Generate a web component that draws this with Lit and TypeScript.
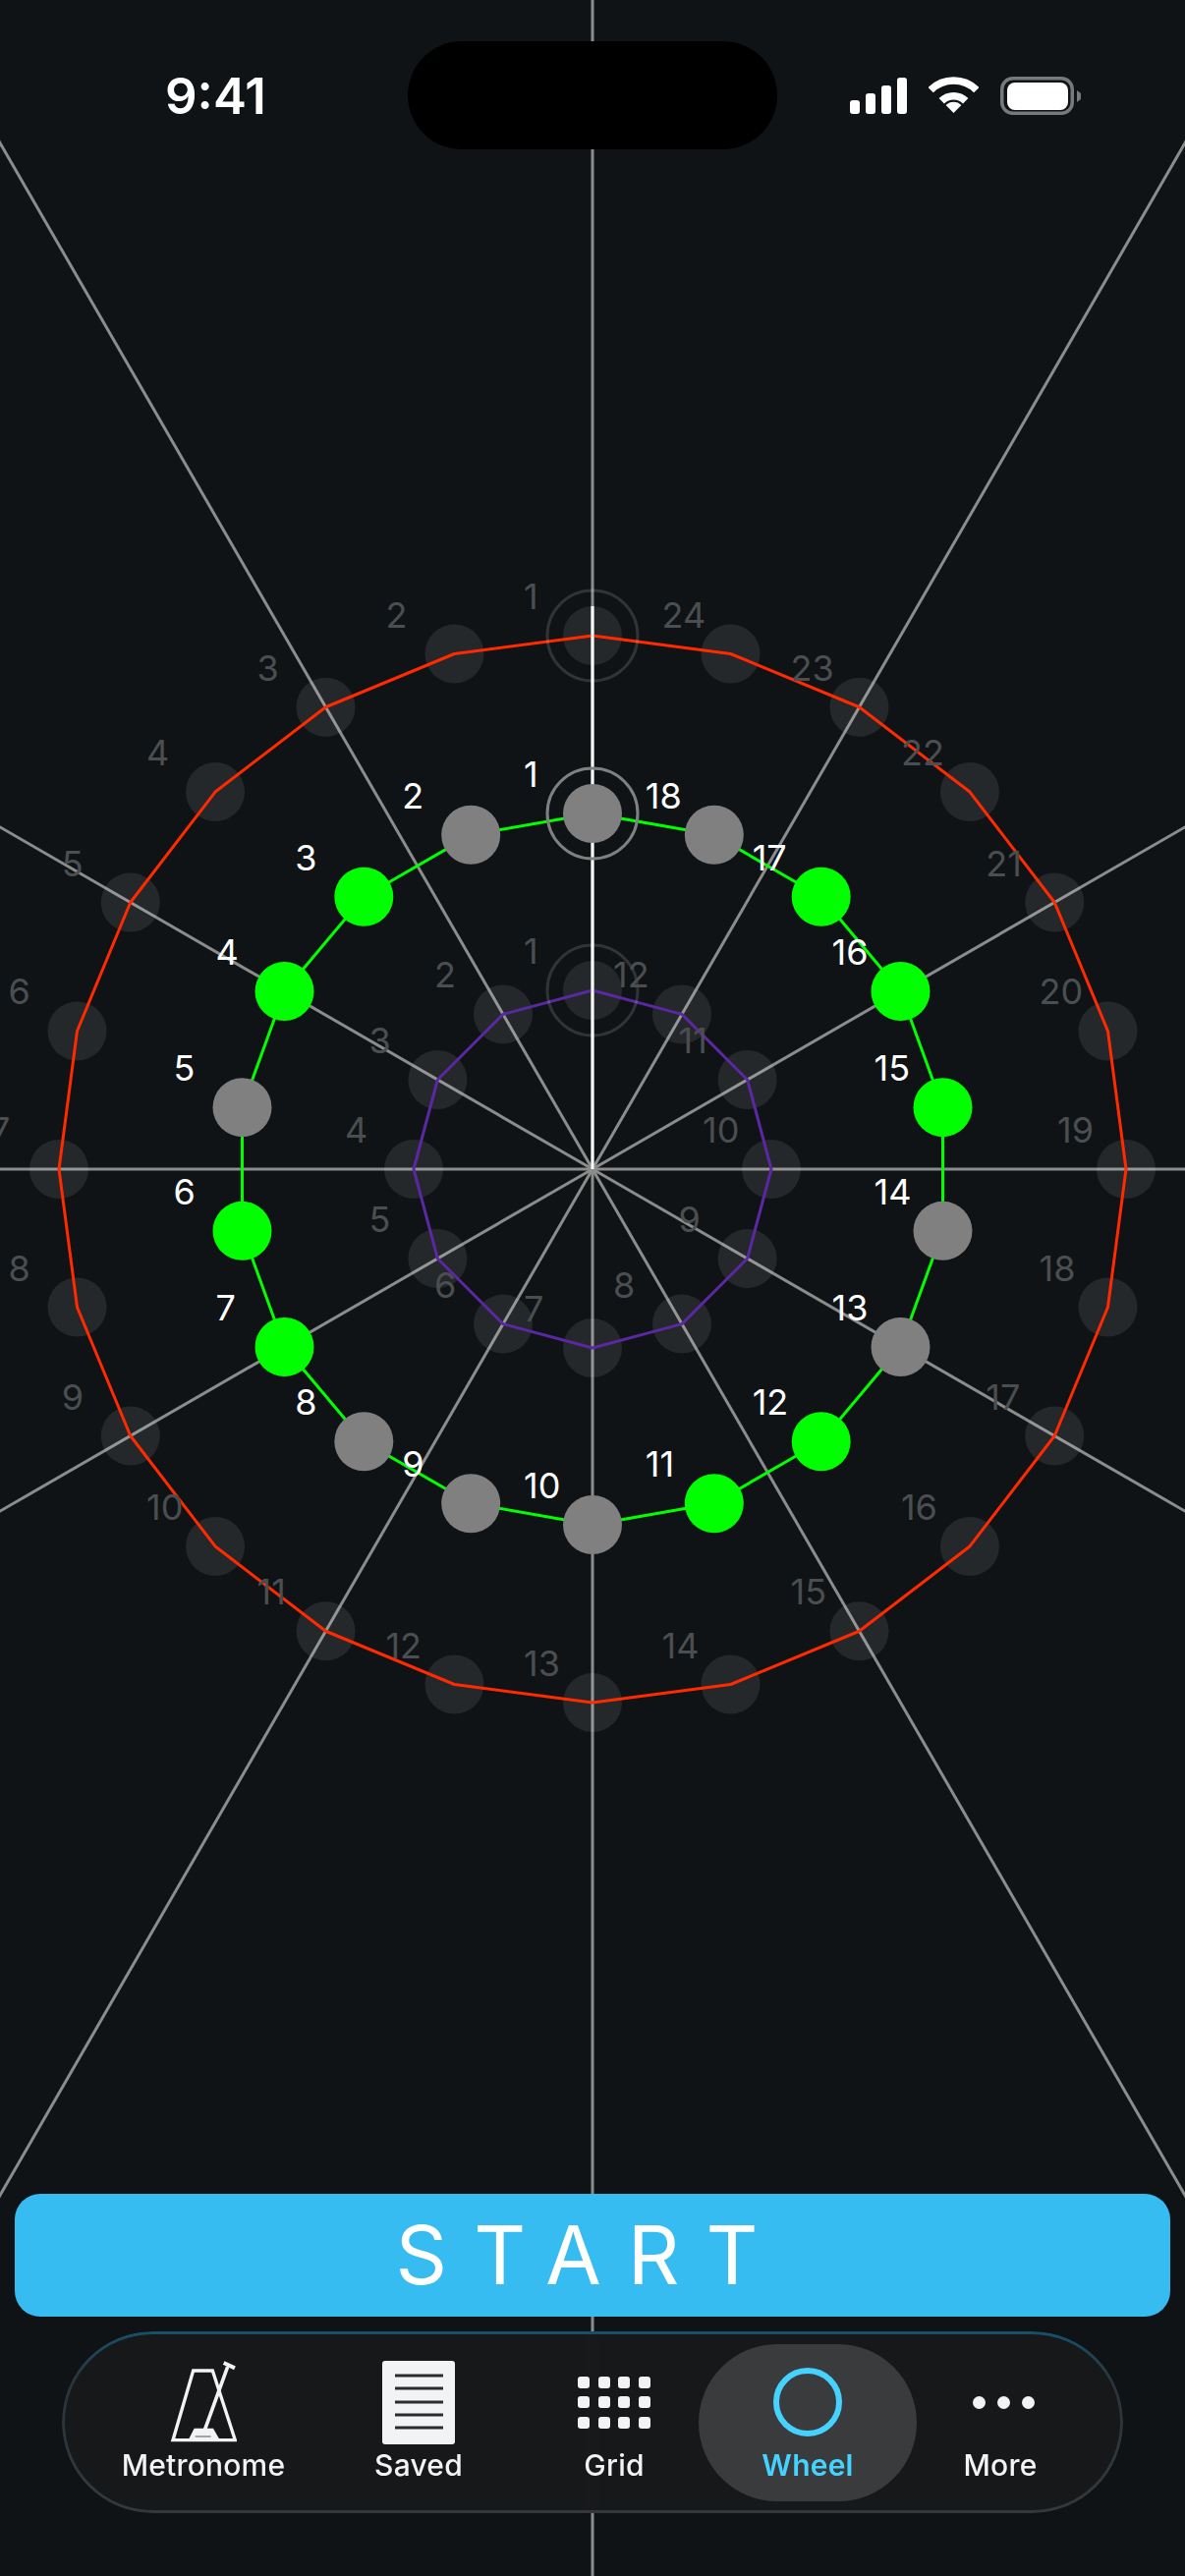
import { LitElement, html, css, svg } from "lit";
import { customElement } from "lit/decorators.js";

const CX = 603;
const CY = 1190;
const DOT_R = 30;

interface Ring {
  count: number;
  radius: number;
  line: string;
  active: boolean;
  on: number[];
}

const RINGS: Ring[] = [
  { count: 24, radius: 543, line: "red", active: false, on: [] },
  { count: 12, radius: 182, line: "purple", active: false, on: [] },
  { count: 18, radius: 362, line: "green", active: true, on: [3, 4, 6, 7, 11, 12, 15, 16, 17] },
];

const pt = (ring: Ring, i: number) => {
  const a = (i / ring.count) * Math.PI * 2;
  return { x: CX - ring.radius * Math.sin(a), y: CY - ring.radius * Math.cos(a) };
};

const fmt = (n: number) => n.toFixed(2);

function renderSpokes() {
  const out = [];
  for (let i = 0; i < 12; i++) {
    const a = (i * Math.PI) / 6;
    const x = CX + 3000 * Math.sin(a);
    const y = CY - 3000 * Math.cos(a);
    out.push(svg`<line class="spoke" x1=${CX} y1=${CY} x2=${fmt(x)} y2=${fmt(y)}></line>`);
  }
  return out;
}

function renderRingBack(ring: Ring) {
  const pts = Array.from({ length: ring.count }, (_, i) => pt(ring, i));
  const poly = pts.map((p) => `${fmt(p.x)},${fmt(p.y)}`).join(" ");
  return ring.active
    ? svg`<polygon class=${"poly " + ring.line} points=${poly}></polygon>
        ${pts.map((p, i) => svg`<circle class=${ring.on.includes(i + 1) ? "dot-green" : "dot-gray"} cx=${fmt(p.x)} cy=${fmt(p.y)} r=${DOT_R}></circle>`)}`
    : svg`${pts.map((p) => svg`<circle class="dot-dim" cx=${fmt(p.x)} cy=${fmt(p.y)} r=${DOT_R}></circle>`)}
        <polygon class=${"poly " + ring.line} points=${poly}></polygon>`;
}

function renderRingFront(ring: Ring) {
  const top = pt(ring, 0);
  const pts = Array.from({ length: ring.count }, (_, i) => pt(ring, i));
  return svg`<circle class=${ring.active ? "halo-on" : "halo-dim"} cx=${top.x} cy=${top.y} r="46"></circle>
    ${pts.map((p, i) => svg`<text class=${ring.active ? "lab-on" : "lab-dim"} x=${fmt(p.x - 70)} y=${fmt(p.y - 27)}>${i + 1}</text>`)}`;
}

@customElement("app-root")
export class AppRoot extends LitElement {
  static styles = css`
    :host {
      display: block;
      position: relative;
      width: 1206px;
      height: 2622px;
      overflow: hidden;
      background: #0f1316;
      font-family: Inter, "Liberation Sans", sans-serif;
    }
    .canvas {
      position: absolute;
      inset: 0;
      width: 1206px;
      height: 2622px;
    }
    .spoke {
      stroke: #8c8c8c;
      stroke-width: 3;
    }
    .beat {
      stroke: #fff;
      stroke-width: 3;
    }
    .poly {
      fill: none;
      stroke-width: 3;
      stroke-linejoin: round;
    }
    .red {
      stroke: #ff2a00;
    }
    .purple {
      stroke: #5a28a0;
    }
    .green {
      stroke: #00ff00;
    }
    .dot-dim {
      fill: rgba(255, 255, 255, 0.09);
    }
    .dot-gray {
      fill: #808080;
    }
    .dot-green {
      fill: #00ff00;
    }
    .halo-on,
    .halo-dim {
      fill: none;
      stroke-width: 3;
    }
    .halo-on {
      stroke: #808080;
    }
    .halo-dim {
      stroke: rgba(255, 255, 255, 0.14);
    }
    .lab-on,
    .lab-dim {
      font-size: 36px;
      font-family: Inter, "Liberation Sans", sans-serif;
    }
    .lab-on {
      fill: #fff;
    }
    .lab-dim {
      fill: #4b4e50;
    }
    .page {
      position: relative;
      display: flex;
      flex-direction: column;
      height: 2622px;
    }
    .status {
      display: flex;
      align-items: center;
      height: 110px;
      margin-top: 42px;
    }
    .time {
      width: 247px;
      padding-left: 168px;
      color: #fff;
      font-size: 51px;
      font-weight: 600;
      line-height: 1;
    }
    .island {
      width: 376px;
      height: 110px;
      border-radius: 55px;
      background: #000;
    }
    .indicators {
      display: flex;
      align-items: center;
      gap: 22px;
      margin-left: 74px;
    }
    .indicators svg {
      display: block;
    }
    .spacer {
      flex: 1;
    }
    .start {
      display: flex;
      align-items: center;
      justify-content: center;
      box-sizing: border-box;
      height: 125px;
      margin: 0 15px;
      padding-right: 5px;
      border-radius: 26px;
      background: #37bcf1;
      color: #fff;
      font-size: 82px;
      font-weight: 400;
      letter-spacing: 27px;
      line-height: 1;
    }
    .nav {
      position: relative;
      display: grid;
      grid-template-columns: 212px 226px 172px 222px 170px;
      box-sizing: border-box;
      width: 1080px;
      height: 185px;
      margin: 15px 0 64px 63px;
      padding: 13px 0 0 38px;
      border-radius: 92.5px;
      background: rgba(24, 25, 27, 0.97);
      backdrop-filter: blur(4px);
    }
    .nav::before {
      content: "";
      position: absolute;
      inset: 0;
      padding: 3px;
      border-radius: inherit;
      background: linear-gradient(180deg, #17506b 0, #2a3438 28%, #35383a 100%);
      -webkit-mask: linear-gradient(#000 0 0) content-box, linear-gradient(#000 0 0);
      -webkit-mask-composite: xor;
      mask-composite: exclude;
    }
    .item {
      display: flex;
      flex-direction: column;
      align-items: center;
      height: 160px;
      color: #f2f3f5;
    }
    .item.active {
      border-radius: 80px;
      background: #3a3b3d;
      color: #46d2fe;
    }
    .icon {
      display: flex;
      align-items: center;
      justify-content: center;
      height: 90px;
      margin-top: 14px;
    }
    .icon svg {
      display: block;
    }
    .label {
      margin-top: 1px;
      font-size: 30px;
      font-weight: 500;
      letter-spacing: 0.2px;
      line-height: 36px;
      white-space: nowrap;
    }
    .active .label {
      font-weight: 600;
    }
    .grid9 {
      display: grid;
      grid-template-columns: repeat(4, 12px);
      gap: 8.5px;
    }
    .grid9 i {
      display: block;
      height: 12px;
      border-radius: 3px;
      background: #f2f3f5;
    }
    .dots {
      display: flex;
      gap: 12px;
      margin-left: 6px;
    }
    .dots i {
      display: block;
      width: 13px;
      height: 13px;
      border-radius: 50%;
      background: #f2f3f5;
    }
  `;

  private wifiArc(r: number) {
    const d = r * Math.SQRT1_2;
    return `M${fmt(25.5 - d)} ${fmt(37 - d)}A${r} ${r} 0 0 1 ${fmt(25.5 + d)} ${fmt(37 - d)}`;
  }

  render() {
    return html`
      <svg class="canvas" viewBox="0 0 1206 2622">
        ${renderSpokes()}
        ${renderRingBack(RINGS[0])}
        ${renderRingBack(RINGS[1])}
        <line class="beat" x1=${CX} y1=${CY} x2=${CX} y2=${CY - 573}></line>
        ${renderRingBack(RINGS[2])}
        ${RINGS.map(renderRingFront)}
      </svg>
      <div class="page">
        <div class="status">
          <div class="time">9:41</div>
          <div class="island"></div>
          <div class="indicators">
            <svg width="58" height="38" viewBox="0 0 58 38" fill="#fff">
              <rect x="0" y="24" width="10" height="14" rx="3"></rect>
              <rect x="16" y="17" width="10" height="21" rx="3"></rect>
              <rect x="32" y="9" width="10" height="29" rx="3"></rect>
              <rect x="48" y="1" width="10" height="37" rx="3"></rect>
            </svg>
            <svg width="51" height="38" viewBox="0 0 51 38" fill="none" stroke="#fff">
              <path d=${this.wifiArc(33)} stroke-width="7.6"></path>
              <path d=${this.wifiArc(17.3)} stroke-width="7.6"></path>
              <path d="M17.6 29.1A11 11 0 0 1 33.4 29.1L25.5 37Z" fill="#fff" stroke="none"></path>
            </svg>
            <svg width="82" height="39" viewBox="0 0 82 39">
              <rect x="1.75" y="1.75" width="71.5" height="35.5" rx="11" fill="none" stroke="#77797b" stroke-width="3.5"></rect>
              <rect x="7" y="6" width="62" height="28" rx="8" fill="#fff"></rect>
              <path d="M78 14L82 17V23L78 26Z" fill="#77797b"></path>
            </svg>
          </div>
        </div>
        <div class="spacer"></div>
        <div class="start">START</div>
        <nav class="nav">
          <div class="item">
            <div class="icon">
              <svg width="68" height="84" viewBox="372 128 204 252" fill="none" stroke="#f2f3f5">
                <path d="M381 370H571L502 158H443Z" stroke-width="10"></path>
                <path d="M477 342L548 146" stroke-width="11"></path>
                <path d="M536 134L570 150" stroke-width="12"></path>
                <path d="M430 366L446 334H504L522 366Z" fill="#f2f3f5" stroke="none"></path>
                <path d="M449 359H497" stroke="#55585a" stroke-width="3"></path>
              </svg>
            </div>
            <div class="label">Metronome</div>
          </div>
          <div class="item">
            <div class="icon">
              <svg width="74" height="85" viewBox="0 0 74 85">
                <rect width="74" height="85" rx="3" fill="#f2f3f5"></rect>
                <path d="M13 15H62M13 28H62M13 42H62M13 55H62M13 68H62" stroke="#2b2c2e" stroke-width="3" fill="none"></path>
              </svg>
            </div>
            <div class="label">Saved</div>
          </div>
          <div class="item">
            <div class="icon">
              <div class="grid9">
                ${Array.from({ length: 12 }, () => html`<i></i>`)}
              </div>
            </div>
            <div class="label">Grid</div>
          </div>
          <div class="item active">
            <div class="icon">
              <svg width="70" height="70" viewBox="0 0 70 70">
                <circle cx="35" cy="35" r="32" fill="none" stroke="#46d2fe" stroke-width="6"></circle>
              </svg>
            </div>
            <div class="label">Wheel</div>
          </div>
          <div class="item">
            <div class="icon">
              <div class="dots"><i></i><i></i><i></i></div>
            </div>
            <div class="label">More</div>
          </div>
        </nav>
      </div>
    `;
  }
}
